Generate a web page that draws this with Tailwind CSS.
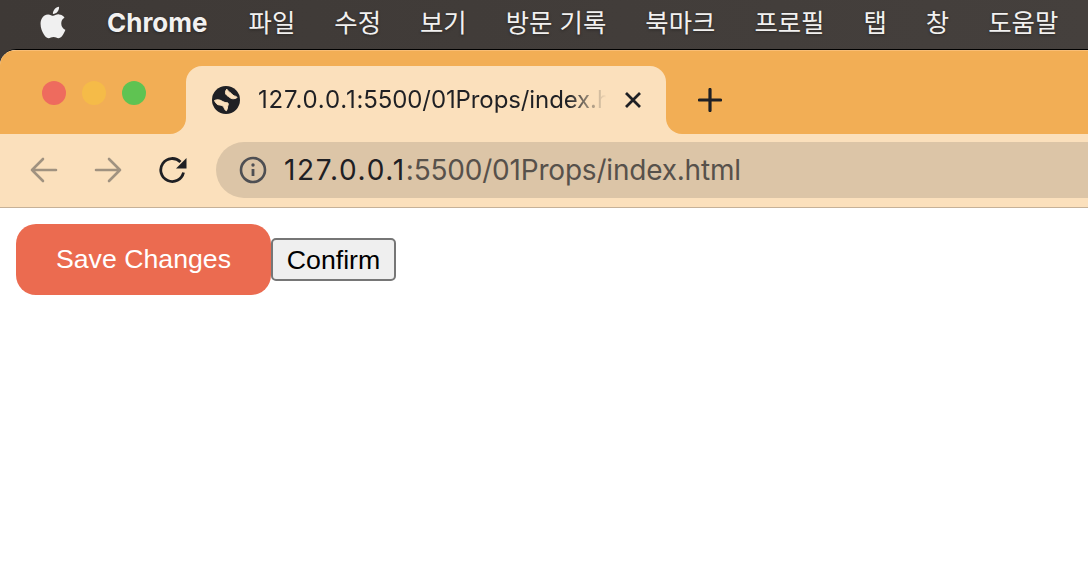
<!DOCTYPE html>
<html lang="ko">
<head>
  <meta charset="UTF-8" />
  <title>127.0.0.1:5500/01Props/index.html</title>
  <script src="https://cdn.jsdelivr.net/npm/@tailwindcss/browser@4"></script>
</head>
<body class="h-[584px] overflow-hidden bg-[#3e3936] font-['Inter','Noto_Sans_CJK_KR',sans-serif]">
  <!-- macOS menu bar -->
  <div class="h-[49px] flex items-center pl-[40px] pb-[3px] text-[26px] leading-none text-[#f2f1f0] bg-gradient-to-r from-[#3e3936] to-[#45403d] [text-shadow:0_1px_3px_rgba(0,0,0,0.4)] whitespace-nowrap">
    <svg class="w-[26px] h-[33px] -mt-[2px]" viewBox="3.5 1.5 17 21" preserveAspectRatio="none" fill="#f0f0f0">
      <path d="M18.71 19.5c-.83 1.24-1.71 2.45-3.05 2.47-1.34.03-1.77-.79-3.29-.79-1.53 0-2 .77-3.27.82-1.31.05-2.3-1.32-3.14-2.53C4.25 17 2.94 12.45 4.7 9.39c.87-1.52 2.43-2.48 4.12-2.51 1.28-.02 2.5.87 3.29.87.78 0 2.26-1.07 3.81-.91.65.03 2.47.26 3.64 1.98-.09.06-2.17 1.28-2.15 3.81.03 3.02 2.65 4.03 2.68 4.04-.03.07-.42 1.44-1.38 2.83M13 3.5c.73-.83 1.94-1.46 2.94-1.5.13 1.17-.34 2.35-1.04 3.19-.69.85-1.83 1.51-2.95 1.42-.15-1.15.41-2.35 1.05-3.11z"/>
    </svg>
    <span class="ml-[41px] font-bold">Chrome</span>
    <nav class="ml-[41px] flex gap-[39px] text-[25.4px]">
      <span>파일</span>
      <span>수정</span>
      <span>보기</span>
      <span>방문 기록</span>
      <span>북마크</span>
      <span>프로필</span>
      <span>탭</span>
      <span>창</span>
      <span>도움말</span>
    </nav>
  </div>

  <!-- browser window -->
  <div class="h-[535px] bg-white rounded-tl-[16px] border-t border-black overflow-hidden">
    <div class="h-px bg-[#f9be76]"></div>

    <!-- tab strip -->
    <div class="h-[83px] flex bg-[#fbe0bc]">
      <div class="w-[186px] bg-[#f2ae55] rounded-br-[16px] flex items-start gap-[16px] pl-[42px] pt-[30px]">
        <span class="w-[24px] h-[24px] rounded-full bg-[#ee6b5e]"></span>
        <span class="w-[24px] h-[24px] rounded-full bg-[#f5bb48]"></span>
        <span class="w-[24px] h-[24px] rounded-full bg-[#5fc352]"></span>
      </div>
      <div class="w-[480px] bg-[#f2ae55]">
        <div class="h-[83px] mt-[15px] bg-[#fbe0bc] rounded-t-[16px] flex items-start pl-[26px] pt-[20px] text-[#1f2024]">
          <svg class="w-[28px] h-[28px] shrink-0" viewBox="0 0 28 28">
            <circle cx="14" cy="14" r="14" fill="#1f2024"/>
            <g fill="#fbe0bc" stroke="#fbe0bc" stroke-width="1">
              <path d="M14.5 3.5C13 5.500 13 8 15 9.500c2 1.300 3.500 3 5.500 3.200 1.800.2 3.300-.4 4.600-1.200-.5-1.200-1.600-1.200-2.800-1.600-2-.6-2.600-2.600-4.300-3.400-1.200-.6-1.600-1.700-3.500-3.500z"/>
              <path d="M2.500 14.500c2.500-1.200 5-.8 7 .3 2 1.200 3 1.800 5 1.800 1.800 0 2.200 1.200 1.500 2.800-.7 1.600-.5 3.600-1.500 5.300-1.200 0-1.800-1.500-2.500-3-.8-1.700-2.200-2.700-4.500-2.700-2.200 0-4-2-5-4.500z"/>
            </g>
          </svg>
          <span class="ml-[18px] w-[352px] overflow-hidden whitespace-nowrap text-[24px] tracking-[-0.1px] leading-[28px] [mask-image:linear-gradient(to_right,black_88%,transparent_99%)]"><span class="tracking-[0.8px]">127.0.0.1</span>:5500/01Props/index.html</span>
          <svg class="ml-[15px] mt-[6px] w-[16px] h-[16px] shrink-0" viewBox="0 0 16 16" fill="none" stroke="#1f2024" stroke-width="2.8">
            <path d="M1 1l14 14M15 1L1 15"/>
          </svg>
        </div>
      </div>
      <div class="flex-1 bg-[#f2ae55] rounded-bl-[16px] pl-[32px] pt-[37px]">
        <svg class="w-[24px] h-[24px]" viewBox="0 0 24 24" fill="none" stroke="#1f2024" stroke-width="3.2" stroke-linecap="round">
          <path d="M12 1.500v21M1.500 12h21"/>
        </svg>
      </div>
    </div>

    <!-- toolbar -->
    <div class="h-[74px] bg-[#fbe0bc] border-b border-[#c6b197] flex items-start pt-[8px]">
      <svg class="ml-[30px] mt-[14px] w-[28px] h-[28px]" viewBox="0 0 28 28" fill="none" stroke="#a09280" stroke-width="2.6" stroke-linecap="round" stroke-linejoin="round">
        <path d="M26 14H2M13 3L2 14l11 11"/>
      </svg>
      <svg class="ml-[36px] mt-[14px] w-[28px] h-[28px]" viewBox="0 0 28 28" fill="none" stroke="#a09280" stroke-width="2.6" stroke-linecap="round" stroke-linejoin="round">
        <path d="M2 14h24M15 3l11 11-11 11"/>
      </svg>
      <svg class="ml-[36px] mt-[14px] w-[30px] h-[28px]" viewBox="0 0 30 28" fill="none">
        <path d="M22.500 6A11.500 11.500 0 1 0 25.500 16.500" stroke="#1f2024" stroke-width="2.800"/>
        <path d="M28.500 2v10.500H18z" fill="#1f2024"/>
      </svg>
      <div class="ml-[28px] flex-1 h-[56px] bg-[#dcc5a7] rounded-l-full flex items-center pl-[23px] text-[28px] tracking-[-0.2px]">
        <svg class="w-[28px] h-[28px] shrink-0" viewBox="0 0 28 28" fill="none">
          <circle cx="14" cy="14" r="12" stroke="#4e4f53" stroke-width="2.6"/>
          <circle cx="14" cy="9" r="1.7" fill="#4e4f53"/>
          <path d="M14 13v7" stroke="#4e4f53" stroke-width="2.8"/>
        </svg>
        <span class="ml-[17px] text-[#1f2024]"><span class="tracking-[1.7px]">127.0.0.1</span><span class="text-[#57514b]">:5500/01Props/index.html</span></span>
      </div>
    </div>

    <!-- page content -->
    <div class="p-[16px] flex items-center font-['Liberation_Sans',sans-serif]">
      <button class="w-[255px] h-[71px] rounded-[20px] bg-[#eb6b50] text-white text-[26.7px]">Save Changes</button>
      <button class="w-[125px] h-[43px] rounded-[5px] border-2 border-[#767676] bg-[#efefef] text-black text-[26.7px]">Confirm</button>
    </div>
  </div>
</body>
</html>
